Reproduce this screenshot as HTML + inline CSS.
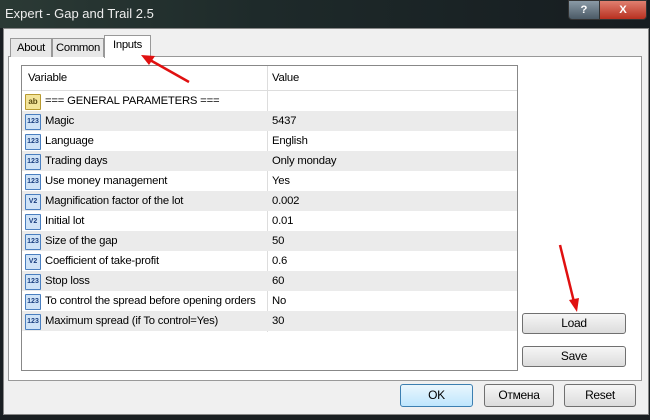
<!DOCTYPE html><html><head><style>
body{margin:0;width:650px;height:420px;overflow:hidden;background:#1a1f22;font-family:"Liberation Sans",sans-serif;font-size:11.3px;position:relative}
.a{position:absolute}
.title{left:0;top:0;width:650px;height:28px;background:linear-gradient(90deg,#2b3a35,#1e2a2a 40%,#161c20);}
.client{left:3px;top:28px;width:644px;height:385px;background:#f0f0f0;border:1px solid #888}
.tab{top:38px;height:18px;border:1px solid #999;border-bottom:none;background:#e8e8e8;line-height:18px;text-align:center;letter-spacing:-0.3px}
.panel{left:8px;top:56px;width:632px;height:323px;background:#fff;border:1px solid #999}
.tbl{left:21px;top:65px;width:495px;height:304px;border:1px solid #888;background:#fff}
.row{position:absolute;left:0;width:495px;height:20px;line-height:20px;letter-spacing:-0.2px}
.row.g{background:#ebebeb}
.row span{position:absolute;white-space:nowrap}
.ic{position:absolute;left:3px;top:3px;width:14px;height:14px;border:1px solid #4a7fc0;background:#cfe3f7;font-size:7px;line-height:14px;text-align:center;color:#1a3f80;font-weight:bold;border-radius:1px;letter-spacing:0}
.btn{border:1px solid #707070;border-radius:3px;background:linear-gradient(#f6f6f6,#dcdcdc);text-align:center;font-size:12px;letter-spacing:-0.3px}
</style></head><body>
<div class="a title"></div>
<div class="a" style="left:5px;top:6px;color:#eee;font-size:13px">Expert - Gap and Trail 2.5</div>
<div class="a" style="left:568px;top:0;width:30px;height:18px;background:linear-gradient(#8a9aa6,#4b5a66);border:1px solid #333;border-radius:0 0 0 4px;color:#fff;text-align:center;font-weight:bold;line-height:18px">?</div>
<div class="a" style="left:599px;top:0;width:46px;height:18px;background:linear-gradient(#e08070,#b83020);border:1px solid #333;border-radius:0 0 4px 0;color:#fff;text-align:center;font-weight:bold;line-height:18px">X</div>
<div class="a client"></div>
<div class="a panel"></div>
<div class="a tab" style="left:10px;width:40px">About</div>
<div class="a tab" style="left:52px;width:50px">Common</div>
<div class="a tab" style="left:104px;top:35px;height:22px;width:45px;background:#fff;line-height:18px">Inputs</div>
<div class="a tbl">
<div class="row" style="top:0;height:24px;line-height:24px;border-bottom:1px solid #ddd"><span style="left:6px">Variable</span><span style="left:250px">Value</span></div>
<div class="a" style="left:245px;top:0;width:1px;height:266px;background:#ddd"></div>
<div class="row" style="top:25px"><div class="ic" style="background:#f3e49a;border-color:#b89a30;color:#5a4a10;font-size:8px">ab</div><span style="left:23px">=== GENERAL PARAMETERS ===</span></div>
<div class="row g" style="top:45px"><div class="ic">123</div><span style="left:23px">Magic</span><span style="left:250px">5437</span></div>
<div class="row" style="top:65px"><div class="ic">123</div><span style="left:23px">Language</span><span style="left:250px">English</span></div>
<div class="row g" style="top:85px"><div class="ic">123</div><span style="left:23px">Trading days</span><span style="left:250px">Only monday</span></div>
<div class="row" style="top:105px"><div class="ic">123</div><span style="left:23px">Use money management</span><span style="left:250px">Yes</span></div>
<div class="row g" style="top:125px"><div class="ic">V2</div><span style="left:23px">Magnification factor of the lot</span><span style="left:250px">0.002</span></div>
<div class="row" style="top:145px"><div class="ic">V2</div><span style="left:23px">Initial lot</span><span style="left:250px">0.01</span></div>
<div class="row g" style="top:165px"><div class="ic">123</div><span style="left:23px">Size of the gap</span><span style="left:250px">50</span></div>
<div class="row" style="top:185px"><div class="ic">V2</div><span style="left:23px">Coefficient of take-profit</span><span style="left:250px">0.6</span></div>
<div class="row g" style="top:205px"><div class="ic">123</div><span style="left:23px">Stop loss</span><span style="left:250px">60</span></div>
<div class="row" style="top:225px"><div class="ic">123</div><span style="left:23px">To control the spread before opening orders</span><span style="left:250px">No</span></div>
<div class="row g" style="top:245px"><div class="ic">123</div><span style="left:23px">Maximum spread (if To control=Yes)</span><span style="left:250px">30</span></div>
</div>
<div class="a btn" style="left:522px;top:313px;width:102px;height:19px;line-height:19px">Load</div>
<div class="a btn" style="left:522px;top:346px;width:102px;height:19px;line-height:19px">Save</div>
<div class="a btn" style="left:400px;top:384px;width:71px;height:21px;line-height:21px;border-color:#3c7fb1;background:linear-gradient(#eaf6fd,#bee6fd)">OK</div>
<div class="a btn" style="left:484px;top:384px;width:68px;height:21px;line-height:21px">Отмена</div>
<div class="a btn" style="left:564px;top:384px;width:70px;height:21px;line-height:21px">Reset</div>
<svg class="a" style="left:0;top:0" width="650" height="420">
<line x1="189" y1="82" x2="150" y2="60" stroke="#e01010" stroke-width="2.5"/>
<polygon points="141,55 155,56 149,65" fill="#e01010"/>
<line x1="560" y1="245" x2="574" y2="302" stroke="#e01010" stroke-width="2.5"/>
<polygon points="577,312 569,300 579,298" fill="#e01010"/>
</svg>
</body></html>
